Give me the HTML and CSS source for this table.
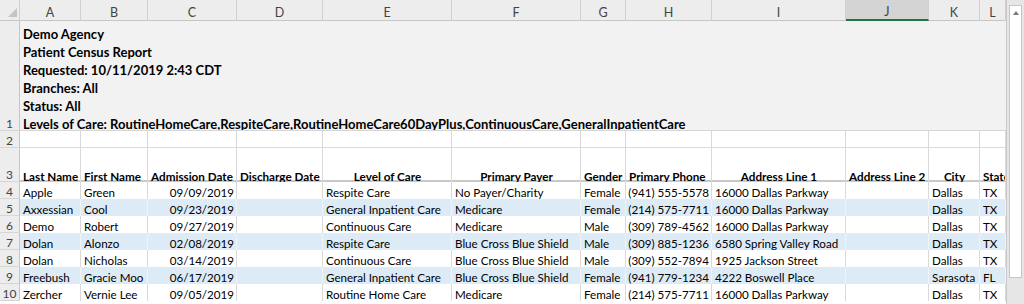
FILE: index.html
```html
<!DOCTYPE html>
<html lang="en">
<head>
<meta charset="utf-8">
<title>Patient Census Report</title>
<link rel="stylesheet" href="styles.css">
</head>
<body>
<div class="app">
  <div class="sheet">
    <div class="row colhdr">
      <div class="corner"><span class="tri"></span></div>
      <div class="ch">A</div><div class="ch">B</div><div class="ch">C</div><div class="ch">D</div>
      <div class="ch">E</div><div class="ch">F</div><div class="ch">G</div><div class="ch">H</div>
      <div class="ch">I</div><div class="ch sel">J</div><div class="ch">K</div><div class="ch">L</div>
    </div>
    <div class="row r1">
      <div class="rh">1</div>
      <div class="title">Demo Agency
Patient Census Report
Requested: 10/11/2019 2:43 CDT
Branches: All
Status: All
Levels of Care: RoutineHomeCare,RespiteCare,RoutineHomeCare60DayPlus,ContinuousCare,GeneralInpatientCare</div>
    </div>
    <div class="row r2">
      <div class="rh">2</div>
      <div class="c"></div><div class="c"></div><div class="c"></div><div class="c"></div><div class="c"></div><div class="c"></div>
      <div class="c"></div><div class="c"></div><div class="c"></div><div class="c"></div><div class="c"></div><div class="c"></div>
    </div>
    <div class="row r3">
      <div class="rh">3</div>
      <div class="c">Last Name</div>
      <div class="c">First Name</div>
      <div class="c">Admission Date</div>
      <div class="c">Discharge Date</div>
      <div class="c ctr">Level of Care</div>
      <div class="c ctr">Primary Payer</div>
      <div class="c">Gender</div>
      <div class="c">Primary Phone</div>
      <div class="c ctr">Address Line 1</div>
      <div class="c">Address Line 2</div>
      <div class="c ctr">City</div>
      <div class="c">State</div>
    </div>

    <div class="row data">
      <div class="rh">4</div>
      <div class="c">Apple</div><div class="c">Green</div><div class="c rt">09/09/2019</div><div class="c"></div>
      <div class="c">Respite Care</div><div class="c">No Payer/Charity</div><div class="c">Female</div><div class="c rt">(941) 555-5578</div>
      <div class="c">16000 Dallas Parkway</div><div class="c"></div><div class="c">Dallas</div><div class="c">TX</div>
    </div>
    <div class="row data band">
      <div class="rh">5</div>
      <div class="c">Axxessian</div><div class="c">Cool</div><div class="c rt">09/23/2019</div><div class="c"></div>
      <div class="c">General Inpatient Care</div><div class="c">Medicare</div><div class="c">Female</div><div class="c rt">(214) 575-7711</div>
      <div class="c">16000 Dallas Parkway</div><div class="c"></div><div class="c">Dallas</div><div class="c">TX</div>
    </div>
    <div class="row data">
      <div class="rh">6</div>
      <div class="c">Demo</div><div class="c">Robert</div><div class="c rt">09/27/2019</div><div class="c"></div>
      <div class="c">Continuous Care</div><div class="c">Medicare</div><div class="c">Male</div><div class="c rt">(309) 789-4562</div>
      <div class="c">16000 Dallas Parkway</div><div class="c"></div><div class="c">Dallas</div><div class="c">TX</div>
    </div>
    <div class="row data band">
      <div class="rh">7</div>
      <div class="c">Dolan</div><div class="c">Alonzo</div><div class="c rt">02/08/2019</div><div class="c"></div>
      <div class="c">Respite Care</div><div class="c">Blue Cross Blue Shield</div><div class="c">Male</div><div class="c rt">(309) 885-1236</div>
      <div class="c">6580 Spring Valley Road</div><div class="c"></div><div class="c">Dallas</div><div class="c">TX</div>
    </div>
    <div class="row data">
      <div class="rh">8</div>
      <div class="c">Dolan</div><div class="c">Nicholas</div><div class="c rt">03/14/2019</div><div class="c"></div>
      <div class="c">Continuous Care</div><div class="c">Blue Cross Blue Shield</div><div class="c">Male</div><div class="c rt">(309) 552-7894</div>
      <div class="c">1925 Jackson Street</div><div class="c"></div><div class="c">Dallas</div><div class="c">TX</div>
    </div>
    <div class="row data band">
      <div class="rh">9</div>
      <div class="c">Freebush</div><div class="c">Gracie Moo</div><div class="c rt">06/17/2019</div><div class="c"></div>
      <div class="c">General Inpatient Care</div><div class="c">Blue Cross Blue Shield</div><div class="c">Female</div><div class="c rt">(941) 779-1234</div>
      <div class="c">4222 Boswell Place</div><div class="c"></div><div class="c">Sarasota</div><div class="c">FL</div>
    </div>
    <div class="row data">
      <div class="rh">10</div>
      <div class="c">Zercher</div><div class="c">Vernie Lee</div><div class="c rt">09/05/2019</div><div class="c"></div>
      <div class="c">Routine Home Care</div><div class="c">Medicare</div><div class="c">Female</div><div class="c rt">(214) 575-7711</div>
      <div class="c">16000 Dallas Parkway</div><div class="c"></div><div class="c">Dallas</div><div class="c">TX</div>
    </div>
  </div>
  <div class="vscroll">
    <div class="sbtn"><span class="up"></span></div>
    <div class="thumb"></div>
  </div>
</div>
</body>
</html>
```

FILE: styles.css
```css
* { box-sizing: border-box; }
html, body {
  margin: 0;
  padding: 0;
  background: #ffffff;
  overflow: hidden;
}
body {
  font-family: "Lato", "Liberation Sans", sans-serif;
  font-size: 11.6px;
  color: #000;
}
.app {
  display: flex;
  width: 1024px;
  height: 304px;
}
.sheet {
  width: 1006px;
  flex: none;
  overflow: hidden;
}
.row {
  display: grid;
  grid-template-columns: 20px 61px 67px 89px 86px 129px 129px 45px 86px 134px 83px 51px 26px;
}
.colhdr { height: 21px; }
.corner, .ch {
  background: #ededed;
  border-right: 1px solid #d0d0d0;
  border-bottom: 1px solid #c6c6c6;
  color: #444;
  font-size: 12.5px;
  display: flex;
  align-items: center;
  justify-content: center;
  padding-top: 4px;
}
.corner { position: relative; }
.corner .tri {
  position: absolute;
  right: 2px;
  bottom: 3px;
  width: 0;
  height: 0;
  border-left: 9px solid transparent;
  border-bottom: 9px solid #c4c4c4;
}
.ch.sel {
  background: #d4d4d4;
  border-bottom: 2px solid #217346;
}
.rh {
  background: #ededed;
  border-right: 1px solid #c6c6c6;
  border-bottom: 1px solid #d6d6d6;
  color: #444;
  font-size: 12px;
  display: flex;
  align-items: flex-end;
  justify-content: center;
  line-height: 12px;
}
.r1 { height: 110px; }
.title {
  grid-column: 2 / -1;
  background: #f2f2f2;
  border-bottom: 1px solid #d6d6d6;
  font-weight: 700;
  font-size: 13px;
  white-space: pre;
  line-height: 18px;
  padding: 4px 0 0 3px;
  overflow: hidden;
}
.r2 { height: 17px; }
.r3 { height: 34px; }
.c {
  border-right: 1px solid #d9d9d9;
  border-bottom: 1px solid #d9d9d9;
  white-space: nowrap;
  overflow: hidden;
  padding: 3px 2px 0 3px;
  display: flex;
  align-items: flex-start;
  line-height: 15px;
}
.r3 .c {
  font-weight: 700;
  font-size: 11.7px;
  border-bottom: none;
  box-shadow: inset 0 -2px 0 #c8c8c8;
  padding-top: 21px;
}
.r3 .c.ctr { justify-content: center; }
.data { height: 17px; }
.data .c { border-bottom: none; }
.c.rt { justify-content: flex-end; }
.band .c {
  background: #ddebf7;
  border-right-color: #eef4fa;
}
.vscroll {
  flex: 1;
  background: #e6e6e6;
  border-left: 1px solid #c8c8c8;
  padding: 5px 2px 0 2px;
  display: flex;
  flex-direction: column;
}
.sbtn {
  height: 14px;
  background: #fff;
  border: 1px solid #c6c6c6;
  border-bottom: none;
  display: flex;
  align-items: center;
  justify-content: center;
}
.up {
  width: 0;
  height: 0;
  border-left: 3px solid transparent;
  border-right: 3px solid transparent;
  border-bottom: 4px solid #777;
}
.thumb {
  height: 259px;
  background: #fff;
  border: 1px solid #c6c6c6;
  border-top: none;
}
```
